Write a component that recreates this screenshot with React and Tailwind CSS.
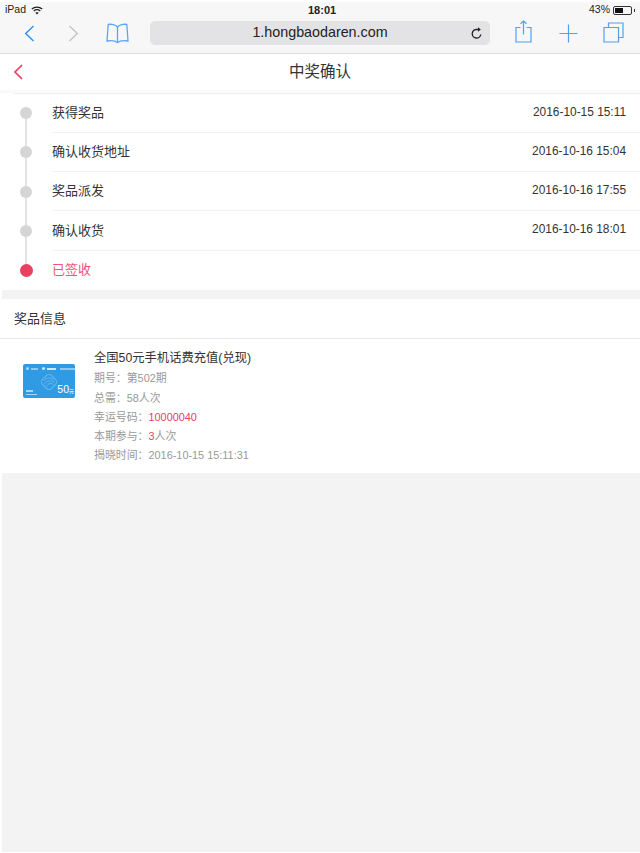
const font = { fontFamily: '"Liberation Sans", "Noto Sans CJK SC", sans-serif' }

const steps = [
  { name: '获得奖品', time: '2016-10-15 15:11' },
  { name: '确认收货地址', time: '2016-10-16 15:04' },
  { name: '奖品派发', time: '2016-10-16 17:55' },
  { name: '确认收货', time: '2016-10-16 18:01' },
  { name: '已签收', time: '', active: true },
]

const info = [
  { label: '期号：', value: '第502期' },
  { label: '总需：', value: '58人次' },
  { label: '幸运号码：', value: '10000040', red: true },
  { label: '本期参与：', red2: '3', value: '人次' },
  { label: '揭晓时间：', value: '2016-10-15 15:11:31' },
]

const Wifi = () => (
  <svg width="12" height="9" viewBox="0 0 12 9" fill="none" stroke="#222" strokeWidth="1.3">
    <path d="M.8 3.1C3.8.5 8.2.5 11.2 3.1" />
    <path d="M2.7 5C4.7 3.4 7.3 3.4 9.3 5" />
    <path d="M6 8.6 4.4 6.7C5.3 6.1 6.7 6.1 7.6 6.7Z" fill="#222" stroke="none" />
  </svg>
)

const StatusBar = () => (
  <div className="h-[16px] flex items-center justify-between px-[5px] text-[10.5px] text-[#222] relative">
    <div className="flex items-center gap-[5px]">
      <span>iPad</span>
      <Wifi />
    </div>
    <span className="absolute left-[308px] font-semibold text-[11px]">18:01</span>
    <div className="flex items-center gap-[2px]">
      <span>43%</span>
      <div className="w-[19px] h-[9px] border border-[#333] rounded-[2px] p-[1px] ml-[1px]">
        <div className="w-[8px] h-full bg-[#111]"></div>
      </div>
      <div className="w-[1px] h-[3px] bg-[#333]"></div>
    </div>
  </div>
)

const Toolbar = () => (
  <div className="h-[35px] flex items-start pt-[3px]">
    <div className="w-[150px] h-[24px] flex items-center shrink-0">
      <svg className="ml-[24px]" width="11" height="17" viewBox="0 0 11 17" fill="none" stroke="#2f8ff5" strokeWidth="1.4">
        <path d="M9.5 1 1.7 8.5 9.5 16" />
      </svg>
      <svg className="ml-[33px]" width="11" height="17" viewBox="0 0 11 17" fill="none" stroke="#c4c4c6" strokeWidth="1.4">
        <path d="M1.5 1 9.3 8.5 1.5 16" />
      </svg>
      <svg className="ml-[27px]" width="23" height="21" viewBox="0 0 23 21" fill="none" stroke="#5aa6f8" strokeWidth="1.3">
        <path d="M11.5 18.5V4C9.5 1.5 5 .8 2.2 1.5L1 18C4.5 17.3 9 17.5 11.5 19.5 14 17.5 18.5 17.3 22 18L20.8 1.5C18 .8 13.5 1.5 11.5 4" />
      </svg>
    </div>
    <div className="w-[340px] h-[24px] bg-[#e3e3e5] rounded-[5px] flex items-center justify-center relative text-[14.3px] text-[#222]">
      1.hongbaodaren.com
      <svg className="absolute right-[7px] top-[6px]" width="12" height="12" viewBox="0 0 12 12" fill="none" stroke="#222" strokeWidth="1.4">
        <path d="M9.8 7.5A4.3 4.3 0 1 1 6 2.5H8" />
        <path d="M7 .2 9.8 2.5 7 4.8Z" fill="#222" stroke="none" />
      </svg>
    </div>
    <svg className="ml-[25px] -mt-[1px]" width="17" height="23" viewBox="0 0 17 23" fill="none" stroke="#4ea1f7" strokeWidth="1.2">
      <path d="M5.5 7.5H1V22H16V7.5H11.5" />
      <path d="M8.5 14.5V1M5.5 3.8 8.5 1 11.5 3.8" />
    </svg>
    <svg className="ml-[27px] mt-[3px]" width="19" height="19" viewBox="0 0 19 19" fill="none" stroke="#4ea1f7" strokeWidth="1.2">
      <path d="M9.5 .5V18.5M.5 9.5H18.5" />
    </svg>
    <svg className="ml-[25px] mt-[1px]" width="21" height="21" viewBox="0 0 21 21" fill="none" stroke="#4ea1f7" strokeWidth="1.2">
      <path d="M1 5.5H15.5V20H1Z" />
      <path d="M5.5 5.5V1H20V15.5H15.5" />
    </svg>
  </div>
)

const Step = ({ step, first, last }) => (
  <div className="h-[39.25px] flex">
    <div className="w-[52px] shrink-0 relative flex items-center">
      {!first && <div className="absolute left-[25px] top-0 h-1/2 w-[2px] bg-[#e2e2e2]"></div>}
      {!last && <div className="absolute left-[25px] bottom-0 h-1/2 w-[2px] bg-[#e2e2e2]"></div>}
      <div className={`relative ml-[20px] rounded-full ${step.active ? 'w-[13px] h-[13px] bg-[#e9405f]' : 'w-[12px] h-[12px] bg-[#d5d5d5]'}`}></div>
    </div>
    <div className={`flex-1 flex items-center justify-between pr-[14px] ${last ? '' : 'border-b border-[#f3f3f3]'}`}>
      <span className={`text-[13px] ${step.active ? 'text-[#ef5474]' : 'text-[#333]'}`}>{step.name}</span>
      <span className="text-[11.9px] text-[#333]">{step.time}</span>
    </div>
  </div>
)

const Card = () => (
  <div className="w-[52px] h-[34px] bg-[#2f9be4] rounded-[2px] relative overflow-hidden">
    <div className="flex items-center gap-[2px] pl-[3px] pt-[3px]">
      <div className="w-[3px] h-[3px] rounded-full bg-[#a9d7f5]"></div>
      <div className="w-[8px] h-[2px] bg-[#8cc9f0]"></div>
      <div className="w-[3px] h-[3px] rounded-full bg-[#cde8f9] ml-[2px]"></div>
      <div className="w-[9px] h-[2px] bg-[#cde8f9]"></div>
      <div className="w-[16px] h-[2px] bg-[#8cc9f0] ml-[2px]"></div>
    </div>
    <svg className="absolute left-[16px] top-[8px]" width="20" height="20" viewBox="0 0 22 22" fill="none" stroke="#6db7ea" strokeWidth="1.1">
      <rect x="4" y="4" width="14" height="14" rx="4" transform="rotate(45 11 11)" />
      <path d="M5 10C8 6 13 6 16 8M6 13C9 9 13 9 17 11M8 16C10 12 14 12 16 14" />
    </svg>
    <div className="absolute left-[3px] bottom-[3px] flex flex-col gap-[2px]">
      <div className="w-[7px] h-[1.5px] bg-[#a9d7f5]"></div>
      <div className="w-[11px] h-[1.5px] bg-[#a9d7f5]"></div>
    </div>
    <div className="absolute right-[1px] bottom-[1px] text-white text-[10.5px] leading-[12px]">
      50<span className="text-[5px]">元</span>
    </div>
  </div>
)

export default function App() {
  return (
    <div className="w-[640px] h-[853px] bg-white pt-[2px] overflow-hidden" style={font}>
      <div className="bg-[#f7f7f7] border-b border-[#dcdcdc]">
        <StatusBar />
        <Toolbar />
      </div>
      <div className="h-[36px] flex items-center relative">
        <svg className="ml-[13px]" width="11" height="16" viewBox="0 0 11 16" fill="none" stroke="#e9405f" strokeWidth="1.7">
          <path d="M9 1 2 8 9 15" />
        </svg>
        <span className="absolute left-0 right-0 text-center text-[15.5px] text-[#333]">中奖确认</span>
      </div>
      <div className="h-[3px] bg-[#fafafa]"></div>
      <div className="h-[0.5px] ml-[13px] bg-[#eeeeee]"></div>
      <div>
        {steps.map((s, i) => (
          <Step key={s.name} step={s} first={i === 0} last={i === steps.length - 1} />
        ))}
      </div>
      <div className="h-[9.25px] ml-[2px] bg-[#f3f3f3]"></div>
      <div className="h-[40px] flex items-center pl-[14px] text-[13px] text-[#333] border-b border-[#e8e8e8]">奖品信息</div>
      <div className="h-[134px] flex pt-[10px]">
        <div className="w-[94px] shrink-0 pl-[23px] pt-[15px]">
          <Card />
        </div>
        <div>
          <div className="h-[19px] mb-[1px] flex items-center text-[12.3px] text-[#333]">全国50元手机话费充值(兑现)</div>
          {info.map(row => (
            <div key={row.label} className="h-[19.2px] flex items-center text-[10.9px] text-[#999]">
              <span>{row.label}</span>
              {row.red2 && <span className="text-[#e9405f]">{row.red2}</span>}
              <span className={row.red ? 'text-[#e9405f]' : ''}>{row.value}</span>
            </div>
          ))}
        </div>
      </div>
      <div className="h-[379px] ml-[2px] bg-[#f3f3f3]"></div>
    </div>
  )
}
